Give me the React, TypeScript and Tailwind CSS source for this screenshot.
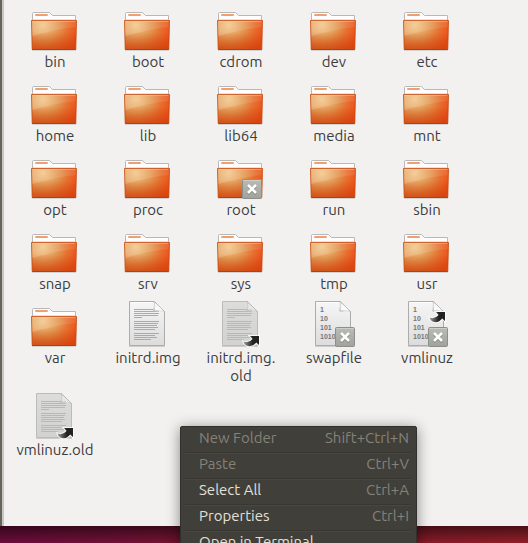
type IconKind = "folder" | "text" | "binary";

interface FileItem {
  name: string;
  kind: IconKind;
  locked?: boolean;
  link?: "low" | "high";
  faded?: boolean;
}

const folders = (names: string[]): FileItem[] =>
  names.map((name) => ({ name, kind: "folder", locked: name === "root" }));

const files: FileItem[] = [
  ...folders(["bin", "boot", "cdrom", "dev", "etc"]),
  ...folders(["home", "lib", "lib64", "media", "mnt"]),
  ...folders(["opt", "proc", "root", "run", "sbin"]),
  ...folders(["snap", "srv", "sys", "tmp", "usr"]),
  ...folders(["var"]),
  { name: "initrd.img", kind: "text" },
  { name: "initrd.img.old", kind: "text", link: "low", faded: true },
  { name: "swapfile", kind: "binary", locked: true },
  { name: "vmlinuz", kind: "binary", link: "high", locked: true },
  { name: "vmlinuz.old", kind: "text", link: "low", faded: true },
];

const menuItems = [
  { label: "New Folder", shortcut: "Shift+Ctrl+N", disabled: true },
  { label: "Paste", shortcut: "Ctrl+V", disabled: true },
  { label: "Select All", shortcut: "Ctrl+A", disabled: false },
  { label: "Properties", shortcut: "Ctrl+I", disabled: false },
  { label: "Open in Terminal", shortcut: "", disabled: false },
];

// Gradients shared by all of the icons
const IconDefs = () => (
  <svg className="absolute size-0" aria-hidden="true">
    <defs>
      <radialGradient id="folderFront" gradientUnits="userSpaceOnUse" cx="12" cy="20" r="36">
        <stop offset="0" stopColor="#f2c586" />
        <stop offset="0.4" stopColor="#e39a55" />
        <stop offset="0.7" stopColor="#e6702f" />
        <stop offset="1" stopColor="#ee4e18" />
      </radialGradient>
      <linearGradient id="folderShade" x1="0" y1="0" x2="0" y2="1">
        <stop offset="0.4" stopColor="#c8400a" stopOpacity="0" />
        <stop offset="1" stopColor="#c8400a" stopOpacity="0.65" />
      </linearGradient>
      <linearGradient id="folderGloss" x1="0" y1="0" x2="1" y2="0">
        <stop offset="0" stopColor="#fff" stopOpacity="0.18" />
        <stop offset="1" stopColor="#fff" stopOpacity="0.08" />
      </linearGradient>
      <linearGradient id="paper" x1="0" y1="0" x2="0" y2="1">
        <stop offset="0" stopColor="#f6f6f6" />
        <stop offset="1" stopColor="#dcdcdc" />
      </linearGradient>
      <linearGradient id="paperFaded" x1="0" y1="0" x2="0" y2="1">
        <stop offset="0" stopColor="#dcdcda" />
        <stop offset="1" stopColor="#d2d2d0" />
      </linearGradient>
      <linearGradient id="fold" x1="0" y1="1" x2="0.7" y2="0.3">
        <stop offset="0" stopColor="#b8b8b8" />
        <stop offset="0.6" stopColor="#f4f4f4" />
        <stop offset="1" stopColor="#d8d8d8" />
      </linearGradient>
      <linearGradient id="badge" x1="0" y1="0" x2="0" y2="1">
        <stop offset="0" stopColor="#b9bbb5" />
        <stop offset="1" stopColor="#a0a39c" />
      </linearGradient>
      <linearGradient id="arrow" x1="0" y1="0" x2="1" y2="0">
        <stop offset="0" stopColor="#999" />
        <stop offset="0.6" stopColor="#222" />
      </linearGradient>
    </defs>
  </svg>
);

const FolderShape = () => (
  <>
    <path d="M1 45.5H45" stroke="#000" strokeOpacity="0.12" />
    <path d="M1.5 17V8.5Q1.5 7.5 2.5 7.5H18.5L21.5 10.5H44.5V17Z" fill="#fdfdfd" stroke="#b8b8b8" />
    <path d="M2 14.5H44" stroke="#e6e4e2" />
    <rect x="4" y="9" width="13" height="2" rx="1" fill="#f0a070" />
    <path d="M0.5 15.5H45.5L44.8 44.5H1.2Z" fill="url(#folderFront)" />
    <path d="M0.5 15.5H45.5L44.8 44.5H1.2Z" fill="url(#folderShade)" stroke="#c4480e" strokeOpacity="0.8" />
    <path d="M1 16H45L44.7 22Q26 24 1.4 31Z" fill="url(#folderGloss)" />
    <path d="M1.5 16.5H44.5" stroke="#fbd5a8" strokeOpacity="0.4" />
    <path d="M1.5 44.5H44.5" stroke="#b83208" strokeOpacity="0.7" />
  </>
);

const textLines = [
  [8, 25], [10, 25], [12, 25], [14, 24], [16, 8],
  [20, 25], [22, 24], [24, 23], [26, 24], [28, 21],
  [32, 25], [34, 21], [36, 23], [38, 17],
];

const PaperShape = ({ faded, binary }: { faded?: boolean; binary?: boolean }) => (
  <>
    <path d="M5 45.5H41" stroke="#000" strokeOpacity="0.15" />
    <path
      d="M5.5 0.5H30.5L40.5 10.5V44.5H5.5Z"
      fill={faded ? "url(#paperFaded)" : "url(#paper)"}
      stroke={faded ? "#bbb" : "#acacac"}
    />
    {!faded && <path d="M6.5 1.5H30" stroke="#fff" />}
    {binary ? (
      <g
        fill="#777"
        className="font-['Liberation_Sans',Arial,sans-serif] text-[7px] font-bold"
      >
        <text x="10" y="11">1</text>
        <text x="10" y="20">10</text>
        <text x="10" y="29">101</text>
        <text x="10" y="38">1010</text>
      </g>
    ) : (
      textLines.map(([y, width]) => (
        <rect key={y} x="10" y={y} width={width} height="1" fill={faded ? "#b8b8b8" : "#aaa"} />
      ))
    )}
    <path
      d="M30 0.5Q31.5 6 30 10Q35 8.5 40.5 10.5L35 5Z"
      fill="#fafafa"
      fillOpacity={faded ? 0.4 : 1}
      stroke="#b4b4b4"
      strokeWidth="0.7"
    />
    <path d="M29.5 1V10.5H40Q36 8 30.5 10Q31.5 5 29.5 1Z" fill="url(#fold)" fillOpacity={faded ? 0.5 : 1} />
  </>
);

const LinkArrow = ({ high }: { high: boolean }) => (
  <g transform={high ? "translate(26 10)" : "translate(26 34)"}>
    <path
      d="M7 1H16V10L13.2 7.6Q9 13 3.5 10.5Q1 9 0.5 6.5Q5 9 9.6 4Z"
      fill="url(#arrow)"
      stroke="#fff"
      strokeWidth="2"
      strokeOpacity="0.8"
      paintOrder="stroke"
    />
  </g>
);

const LockBadge = () => (
  <g>
    <rect x="25.5" y="26.5" width="19" height="19" rx="1" fill="url(#badge)" stroke="#8d908a" />
    <path d="M26.5 27.5H43.5" stroke="#cccec8" />
    <path d="M31 33L39 41M39 33L31 41" stroke="#80837c" strokeWidth="2.5" />
    <path d="M31 32L39 40M39 32L31 40" stroke="#fff" strokeWidth="2.5" />
  </g>
);

const FileIcon = ({ item }: { item: FileItem }) => (
  <svg className="size-12 shrink-0" viewBox="0 0 48 48" fill="none" aria-hidden="true">
    {item.kind === "folder" ? (
      <FolderShape />
    ) : (
      <PaperShape faded={item.faded} binary={item.kind === "binary"} />
    )}
    {item.link && <LinkArrow high={item.link === "high"} />}
    {item.locked && <LockBadge />}
  </svg>
);

const FileGrid = () => (
  <ul className="grid grid-cols-[repeat(auto-fill,92px)] gap-x-px gap-y-2 pt-[5px] pl-[5px]">
    {files.map((item) => (
      <li key={item.name} className="flex flex-col items-center">
        <FileIcon item={item} />
        <span className="text-center text-[15px] leading-[18px] text-[#3c3c3c]">
          {item.name === "initrd.img.old" ? (
            <>
              initrd.img.
              <br />
              old
            </>
          ) : (
            item.name
          )}
        </span>
      </li>
    ))}
  </ul>
);

const ContextMenu = () => (
  <div
    role="menu"
    className="absolute top-[426px] left-[180px] w-[237px] rounded-t-xs border border-[#31302c] bg-[#403f3a] px-1 shadow-[0_2px_14px_rgba(0,0,0,0.45)]"
  >
    {menuItems.map((item) => (
      <button
        key={item.label}
        type="button"
        role="menuitem"
        disabled={item.disabled}
        className="flex h-[26px] w-full items-center justify-between border-b border-[#383732] pr-[3px] pb-1 pl-[14px] text-[15px] leading-5 text-[#e4e0d8] shadow-[0_1px_0_#484742] disabled:text-[#858279]"
      >
        <span>{item.label}</span>
        <span className="text-[#858279]">{item.shortcut}</span>
      </button>
    ))}
  </div>
);

const App = () => {
  return (
    <div className="relative flex h-screen flex-col overflow-hidden font-['Ubuntu','Noto_Sans',sans-serif]">
      <IconDefs />

      {/* File manager window */}
      <main className="min-h-0 flex-1 border-l-2 border-[#67655a] bg-[#f2f1f0]">
        <div className="h-full border-l-2 border-[#c9c5c2]">
          <FileGrid />
        </div>
      </main>

      {/* Desktop wallpaper */}
      <div className="h-[17px] shrink-0 bg-linear-to-r from-[#6b0c3b] via-[#79172c] to-[#921f29]">
        <div className="h-full bg-linear-to-b from-black/50 to-transparent" />
      </div>

      <ContextMenu />
    </div>
  );
};

export default App;
